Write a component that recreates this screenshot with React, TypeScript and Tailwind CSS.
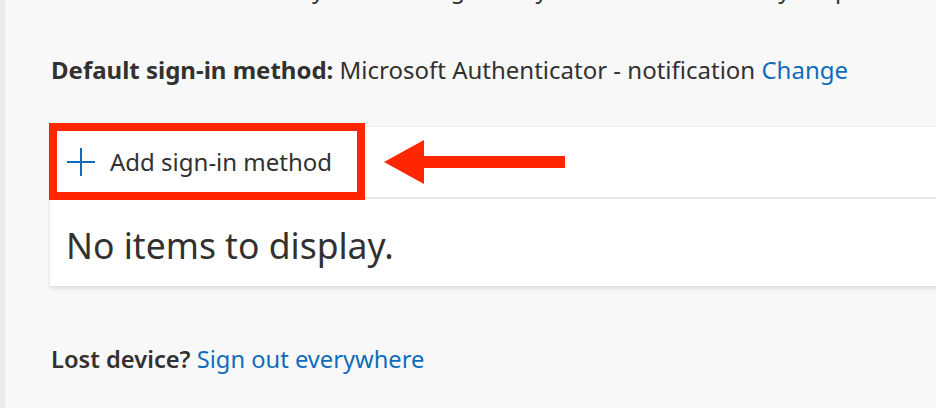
export default function App() {
  return (
    <div className="relative h-[408px] w-[936px] overflow-hidden border-l-[5px] border-[#ebebeb] bg-[#f8f8f8] font-['Noto_Sans',sans-serif] text-[#323130]">
      <div className="pt-px pl-[46px]">
        {/* cut-off intro line */}
        <p className="-mt-[26px] whitespace-nowrap text-[23.6px] leading-[28px]">
          These are the methods you use to sign into your account or reset your password.
        </p>

        <p className="mt-[53px] whitespace-nowrap text-[24px] leading-[28px]">
          <span className="font-bold">Default sign-in method:</span> Microsoft Authenticator - notification{" "}
          <a href="#" className="text-[#0f6cbd]">
            Change
          </a>
        </p>

        {/* methods list card */}
        <div className="mt-[42px] -ml-[1px] w-[1000px] border-t border-[#ececec] bg-white shadow-[0_1.5px_4px_rgba(0,0,0,0.13)]">
          <div className="flex h-[72px] items-center gap-[15px] border-b-2 border-[#e8e8e8] pl-[17px]">
            <svg width="28" height="28" viewBox="0 0 28 28" className="shrink-0">
              <path d="M14 0v28M0 14h28" stroke="#0f6cbd" strokeWidth="2" />
            </svg>
            <span className="text-[24px]">Add sign-in method</span>
          </div>
          <div className="flex h-[87px] items-center pl-[16px] pt-[6px]">
            <span className="text-[35.5px]">No items to display.</span>
          </div>
        </div>

        <p className="mt-[59px] whitespace-nowrap text-[23.7px] leading-[28px]">
          <span className="font-semibold">Lost device?</span>{" "}
          <a href="#" className="text-[#0f6cbd]">
            Sign out everywhere
          </a>
        </p>
      </div>

      {/* annotation overlay */}
      <div className="absolute left-[44px] top-[123px] h-[77px] w-[316px] border-[8px] border-[#ff2600]" />
      <svg className="absolute left-[374px] top-[138px]" width="190" height="48" viewBox="0 0 190 48">
        <path d="M5 24 L45 2 L45 18 L186 18 L186 30 L45 30 L45 46 Z" fill="#ff2600" />
      </svg>
    </div>
  );
}
